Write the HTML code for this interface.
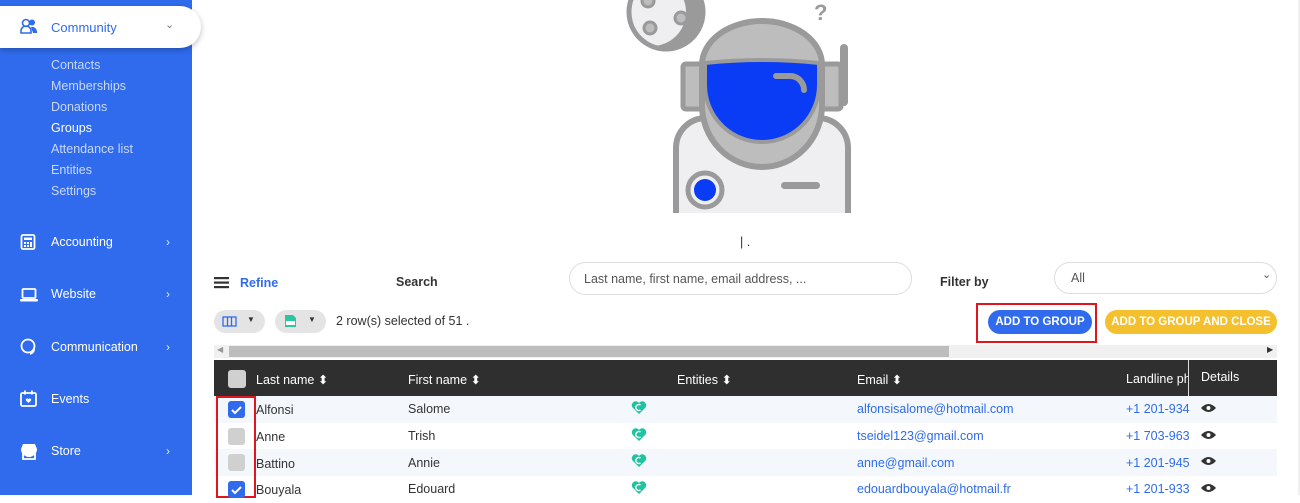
<!DOCTYPE html>
<html><head><meta charset="utf-8"><style>
*{box-sizing:border-box;margin:0;padding:0}
body{width:1300px;height:495px;overflow:hidden;background:#fff;font-family:"Liberation Sans",sans-serif;position:relative;color:#333}
.sb{position:absolute;left:0;top:0;width:192px;height:495px;background:#2f6bec}
.comm{position:absolute;left:0;top:6px;width:201px;height:42px;background:#fff;border-radius:0 22px 22px 0;box-shadow:0 2px 6px rgba(0,0,0,.25)}
.comm span{position:absolute;left:51px;top:14px;font-size:13px;color:#2f6bec}
.sub{position:absolute;left:51px;font-size:12.5px;color:#c9d8fb}
.nav{position:absolute;left:51px;font-size:12.5px;color:#fff}
.chev{position:absolute;left:166px;color:#dfe8fd;font-size:12px}
.ic{position:absolute;left:20px}
.t{position:absolute;font-size:12.5px}
.b{font-weight:bold}
.pill{position:absolute;border-radius:20px}
.btn{display:flex;align-items:center;justify-content:center}
.hd{position:absolute;left:214px;top:360px;width:1063px;height:36px;background:#2f2f2f}
.row{position:absolute;left:214px;width:1063px;height:27px}
.cb{position:absolute;left:228px;width:17px;height:17px;border-radius:3px;background:#d0d0d0}
.cb.on{background:#2f6bec}
.link{color:#2f6bec}
.ht{position:absolute;left:631px}
</style></head><body>
<div class="sb"></div>
<div class="comm">
<svg class="ic" style="top:12px" width="18" height="16" viewBox="0 0 18 16"><circle cx="6" cy="5" r="3.5" fill="none" stroke="#2f6bec" stroke-width="1.6"/><path d="M1 15v-2a5 5 0 0 1 10 0v2z" fill="none" stroke="#2f6bec" stroke-width="1.6"/><circle cx="12" cy="4.5" r="3" fill="#2f6bec"/><path d="M11 9a5 5 0 0 1 6 5v1h-4" fill="#2f6bec"/></svg>
<span>Community</span><span style="left:165px;top:12px;font-size:11px;color:#777">⌄</span></div>
<div class="sub" style="top:58px">Contacts</div>
<div class="sub" style="top:79px">Memberships</div>
<div class="sub" style="top:100px">Donations</div>
<div class="sub" style="top:121px;color:#fff">Groups</div>
<div class="sub" style="top:142px">Attendance list</div>
<div class="sub" style="top:163px">Entities</div>
<div class="sub" style="top:184px">Settings</div>
<svg class="ic" style="top:234px" width="16" height="16"><rect x="1.5" y="1" width="13" height="14" rx="1.5" fill="none" stroke="#fff" stroke-width="1.8"/><rect x="4" y="3.5" width="8" height="2.5" fill="#fff"/><rect x="4" y="8" width="2" height="2" fill="#fff"/><rect x="7" y="8" width="2" height="2" fill="#fff"/><rect x="10" y="8" width="2" height="5" fill="#fff"/><rect x="4" y="11" width="2" height="2" fill="#fff"/><rect x="7" y="11" width="2" height="2" fill="#fff"/></svg>
<div class="nav" style="top:235px">Accounting</div><div class="chev" style="top:235px">›</div>
<svg class="ic" style="top:288px" width="18" height="14"><rect x="2.5" y="1" width="13" height="9" rx="1" fill="none" stroke="#fff" stroke-width="1.8"/><rect x="0" y="11" width="18" height="2.5" rx="1" fill="#fff"/></svg>
<div class="nav" style="top:287px">Website</div><div class="chev" style="top:287px">›</div>
<svg class="ic" style="top:338px" width="18" height="17"><circle cx="8" cy="8" r="6.5" fill="none" stroke="#fff" stroke-width="1.8"/><path d="M14 10a5 5 0 0 1 -4 6" fill="none" stroke="#fff" stroke-width="1.6"/></svg>
<div class="nav" style="top:340px">Communication</div><div class="chev" style="top:340px">›</div>
<svg class="ic" style="top:390px" width="17" height="17"><rect x="1" y="3" width="15" height="13" rx="1.5" fill="none" stroke="#fff" stroke-width="1.8"/><rect x="4" y="0.5" width="1.8" height="4" fill="#fff"/><rect x="11" y="0.5" width="1.8" height="4" fill="#fff"/><path d="M8.5 13l-2.5-2.5a1.3 1.3 0 0 1 2.5-1.3a1.3 1.3 0 0 1 2.5 1.3z" fill="#fff"/></svg>
<div class="nav" style="top:392px">Events</div>
<svg class="ic" style="top:443px" width="18" height="17"><path d="M1 6l2-5h12l2 5a2 2 0 0 1 -16 0z" fill="#fff"/><path d="M3 9v7h12v-7" fill="none" stroke="#fff" stroke-width="1.8"/></svg>
<div class="nav" style="top:444px">Store</div><div class="chev" style="top:444px">›</div>
<div style="position:absolute;left:1298px;top:0;width:2px;height:495px;background:#f0f0f0"></div>

<svg style="position:absolute;left:0;top:0" width="1300" height="220">
<defs><clipPath id="mc"><circle cx="666" cy="12" r="37"/></clipPath></defs>
<circle cx="666" cy="12" r="37" fill="#9a9a9a"/>
<circle cx="652" cy="12" r="34" fill="#efeff1" clip-path="url(#mc)"/>
<circle cx="666" cy="12" r="37" fill="none" stroke="#9a9a9a" stroke-width="5"/>
<circle cx="681" cy="18" r="6" fill="#bdbdbd" stroke="#9a9a9a" stroke-width="3"/>
<circle cx="650" cy="28" r="6" fill="#bdbdbd" stroke="#9a9a9a" stroke-width="3"/>
<circle cx="648" cy="1" r="6" fill="#bdbdbd" stroke="#9a9a9a" stroke-width="3"/>
<text x="814" y="20" font-size="22" fill="#9a9a9a" font-weight="bold" font-family="Liberation Sans">?</text>
<path d="M676 213v-65a30 30 0 0 1 30 -30h112a30 30 0 0 1 30 30v65" fill="#efeff1" stroke="#9a9a9a" stroke-width="6"/>
<rect x="683" y="64" width="20" height="45" rx="3" fill="#bdbdbd" stroke="#9a9a9a" stroke-width="5"/>
<rect x="821" y="64" width="20" height="45" rx="3" fill="#bdbdbd" stroke="#9a9a9a" stroke-width="5"/>
<rect x="840" y="44" width="8" height="62" rx="4" fill="#9a9a9a"/>
<path d="M702 105v-40a60 44 0 0 1 120 0v40a60 62 0 0 1 -120 0z" fill="#bdbdbd" stroke="#9a9a9a" stroke-width="6"/>
<path d="M705 63q57 -6 114 0v22a57 57 0 0 1 -114 0z" fill="#0a3cf5" stroke="#9a9a9a" stroke-width="4"/>
<path d="M776 76h14a14 14 0 0 1 14 14" fill="none" stroke="#9a9a9a" stroke-width="6" stroke-linecap="round"/>
<circle cx="705" cy="190" r="17" fill="#efeff1" stroke="#9a9a9a" stroke-width="5"/>
<circle cx="705" cy="190" r="11" fill="#0a3cf5"/>
<rect x="781" y="182" width="39" height="7" rx="3.5" fill="#9a9a9a"/>
</svg>
<div class="t" style="left:740px;top:235px">| .</div>

<svg style="position:absolute;left:214px;top:277px" width="16" height="12"><rect y="0" width="15" height="2.2" fill="#333"/><rect y="4.5" width="15" height="2.2" fill="#333"/><rect y="9" width="15" height="2.2" fill="#333"/></svg>
<div class="t b" style="left:240px;top:276px;color:#2f6bec">Refine</div>
<div class="t b" style="left:396px;top:275px">Search</div>
<div class="pill" style="left:569px;top:262px;width:343px;height:33px;border:1px solid #ddd;border-radius:18px"></div>
<div class="t" style="left:584px;top:272px;color:#555">Last name, first name, email address, ...</div>
<div class="t b" style="left:940px;top:275px">Filter by</div>
<div class="pill" style="left:1054px;top:262px;width:223px;height:32px;border:1px solid #ddd;border-radius:18px"></div>
<div class="t" style="left:1071px;top:271px;color:#555">All</div>
<div class="t" style="left:1262px;top:268px;color:#555;font-size:11px">⌄</div>

<div class="pill" style="left:214px;top:310px;width:51px;height:23px;background:#e4e4e4"></div>
<svg style="position:absolute;left:222px;top:316px" width="15" height="11"><rect x="1" y="1" width="13" height="9" fill="none" stroke="#2f6bec" stroke-width="1.3"/><path d="M5.5 1v9M9.5 1v9" stroke="#2f6bec" stroke-width="1.3"/></svg>
<div class="t" style="left:247px;top:315px;font-size:8px">▼</div>
<div class="pill" style="left:275px;top:310px;width:51px;height:23px;background:#e4e4e4"></div>
<svg style="position:absolute;left:284px;top:314px" width="13" height="14"><path d="M1 1h8l3 3v9h-11z" fill="#2ec4a0"/><rect x="2" y="7" width="9" height="4" fill="#fff"/></svg>
<div class="t" style="left:308px;top:315px;font-size:8px">▼</div>
<div class="t" style="left:336px;top:314px">2 row(s) selected of 51 .</div>

<div style="position:absolute;left:976px;top:303px;width:121px;height:40px;border:2px solid #e0151d"></div>
<div class="pill b btn" style="left:988px;top:310px;width:104px;height:24px;background:#2f6bec;color:#fff;font-size:11.5px">ADD TO GROUP</div>
<div class="pill b btn" style="left:1105px;top:310px;width:172px;height:24px;background:#f4c02e;color:#fff;font-size:11.5px">ADD TO GROUP AND CLOSE</div>

<div style="position:absolute;left:214px;top:345px;width:1063px;height:13px;background:#f0f0f0"></div>
<div style="position:absolute;left:229px;top:346px;width:720px;height:11px;background:#bdbdbd"></div>
<div class="t" style="left:217px;top:345px;font-size:8px;color:#999">◀</div>
<div class="t" style="left:1267px;top:345px;font-size:8px;color:#333">▶</div>

<div class="hd"></div>
<div style="position:absolute;left:1188px;top:360px;width:1px;height:135px;background:#ddd"></div>
<div class="cb" style="top:370px;width:18px;height:18px"></div>
<div class="t" style="left:256px;top:372px;color:#fff">Last name ⬍</div>
<div class="t" style="left:408px;top:372px;color:#fff">First name ⬍</div>
<div class="t" style="left:677px;top:372px;color:#fff">Entities ⬍</div>
<div class="t" style="left:857px;top:372px;color:#fff">Email ⬍</div>
<div class="t" style="left:1126px;top:372px;color:#fff;width:62px;overflow:hidden;white-space:nowrap">Landline phone</div>
<div class="t" style="left:1201px;top:370px;color:#fff">Details</div>

<div class="row" style="top:396px;background:#f4f8fc"></div>
<div class="row" style="top:423px;background:#fff"></div>
<div class="row" style="top:449px;background:#f4f8fc"></div>
<div class="row" style="top:476px;background:#fff"></div>

<div style="position:absolute;left:216px;top:396px;width:40px;height:102px;border:2px solid #e0151d"></div>

<div class="cb on" style="top:401px"><svg width="17" height="17"><path d="M4 9l3 3 6-6" fill="none" stroke="#fff" stroke-width="2"/></svg></div>
<div class="cb" style="top:428px"></div>
<div class="cb" style="top:454px"></div>
<div class="cb on" style="top:481px"><svg width="17" height="17"><path d="M4 9l3 3 6-6" fill="none" stroke="#fff" stroke-width="2"/></svg></div>

<div class="t" style="left:256px;top:403px">Alfonsi</div><div class="t" style="left:408px;top:402px">Salome</div>
<div class="t" style="left:256px;top:430px">Anne</div><div class="t" style="left:408px;top:429px">Trish</div>
<div class="t" style="left:256px;top:457px">Battino</div><div class="t" style="left:408px;top:456px">Annie</div>
<div class="t" style="left:256px;top:483px">Bouyala</div><div class="t" style="left:408px;top:482px">Edouard</div>

<svg class="ht" style="top:400px" width="16" height="15"><path d="M8 14L1.5 7.5A3.8 3.8 0 0 1 8 3a3.8 3.8 0 0 1 6.5 4.5z" fill="#1fc3a0"/><path d="M9.5 5a3 3 0 1 0 0 5" fill="none" stroke="#fff" stroke-width="1.4"/></svg>
<svg class="ht" style="top:427px" width="16" height="15"><path d="M8 14L1.5 7.5A3.8 3.8 0 0 1 8 3a3.8 3.8 0 0 1 6.5 4.5z" fill="#1fc3a0"/><path d="M9.5 5a3 3 0 1 0 0 5" fill="none" stroke="#fff" stroke-width="1.4"/></svg>
<svg class="ht" style="top:453px" width="16" height="15"><path d="M8 14L1.5 7.5A3.8 3.8 0 0 1 8 3a3.8 3.8 0 0 1 6.5 4.5z" fill="#1fc3a0"/><path d="M9.5 5a3 3 0 1 0 0 5" fill="none" stroke="#fff" stroke-width="1.4"/></svg>
<svg class="ht" style="top:480px" width="16" height="15"><path d="M8 14L1.5 7.5A3.8 3.8 0 0 1 8 3a3.8 3.8 0 0 1 6.5 4.5z" fill="#1fc3a0"/><path d="M9.5 5a3 3 0 1 0 0 5" fill="none" stroke="#fff" stroke-width="1.4"/></svg>

<div class="t link" style="left:857px;top:402px">alfonsisalome@hotmail.com</div>
<div class="t link" style="left:857px;top:429px">tseidel123@gmail.com</div>
<div class="t link" style="left:857px;top:456px">anne@gmail.com</div>
<div class="t link" style="left:857px;top:482px">edouardbouyala@hotmail.fr</div>
<div class="t link" style="left:1126px;top:402px">+1 201-934</div>
<div class="t link" style="left:1126px;top:429px">+1 703-963</div>
<div class="t link" style="left:1126px;top:456px">+1 201-945</div>
<div class="t link" style="left:1126px;top:482px">+1 201-933</div>

<svg style="position:absolute;left:1201px;top:403px" width="15" height="92"><g fill="#333"><path d="M0 5q7.5-8 15 0q-7.5 8-15 0z"/><circle cx="7.5" cy="5" r="2" fill="#fff"/></g><g fill="#333" transform="translate(0,27)"><path d="M0 5q7.5-8 15 0q-7.5 8-15 0z"/><circle cx="7.5" cy="5" r="2" fill="#fff"/></g><g fill="#333" transform="translate(0,53)"><path d="M0 5q7.5-8 15 0q-7.5 8-15 0z"/><circle cx="7.5" cy="5" r="2" fill="#fff"/></g><g fill="#333" transform="translate(0,80)"><path d="M0 5q7.5-8 15 0q-7.5 8-15 0z"/><circle cx="7.5" cy="5" r="2" fill="#fff"/></g></svg>
</body></html>
